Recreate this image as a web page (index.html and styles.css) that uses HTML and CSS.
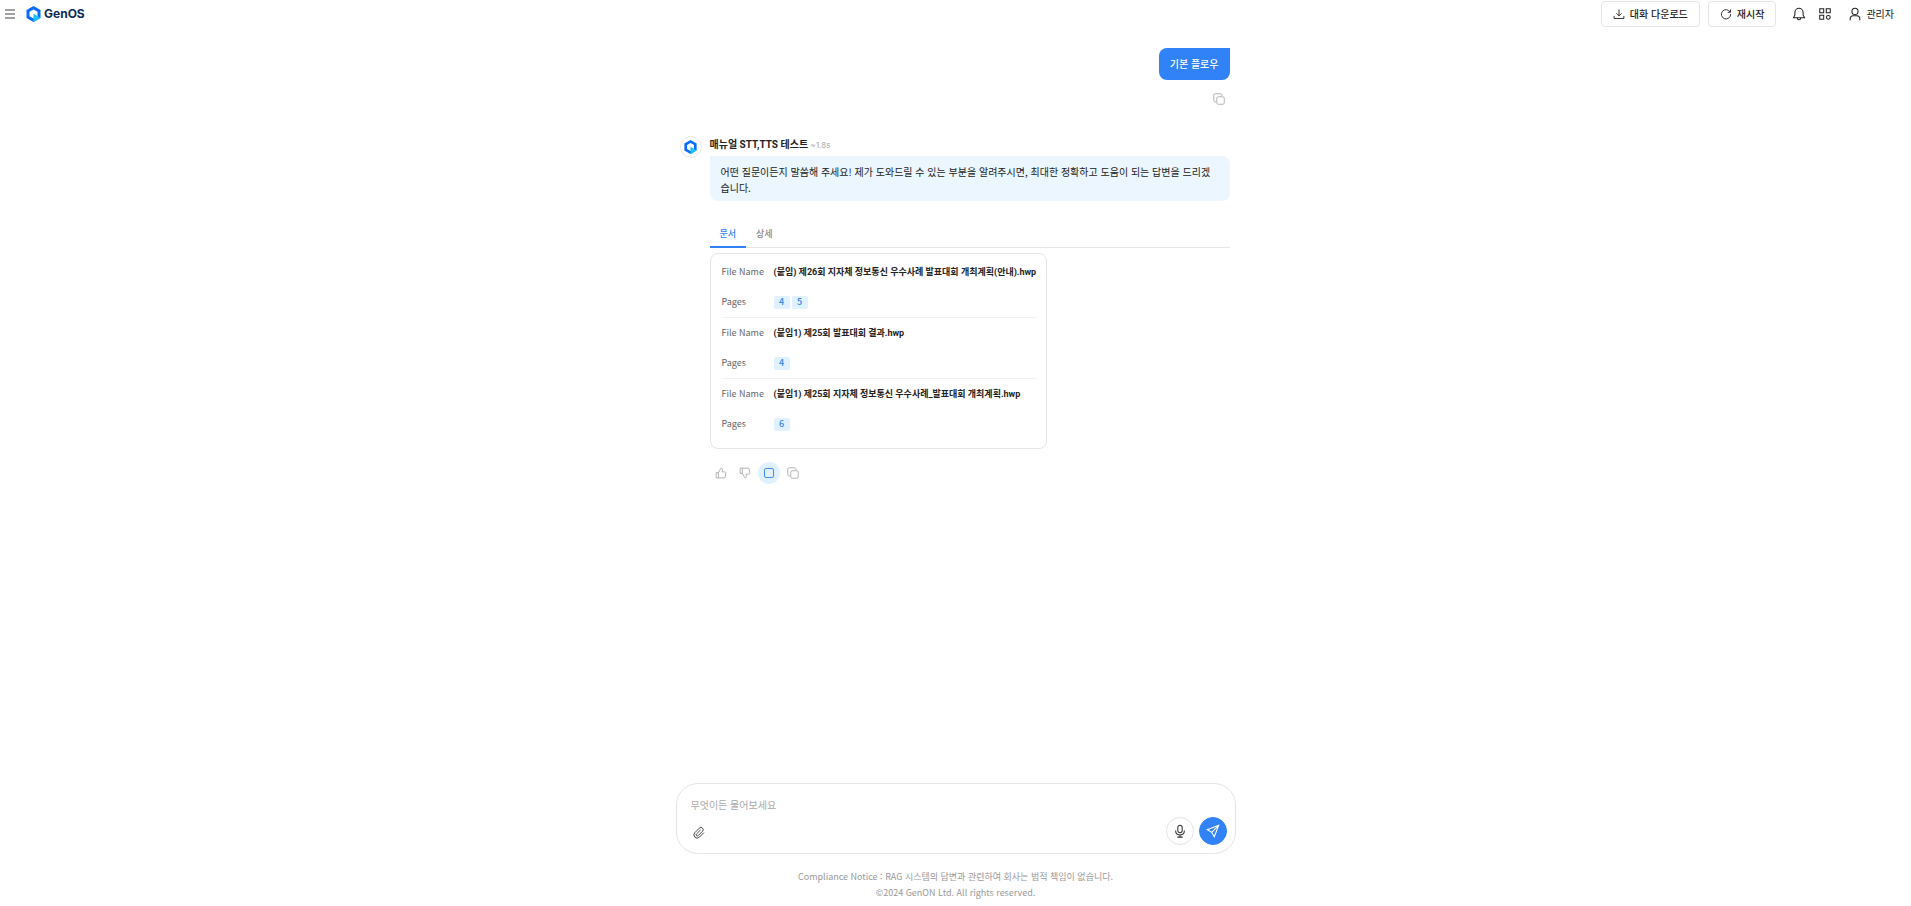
FILE: index.html
```html
<!DOCTYPE html>
<html lang="ko">
<head>
  <meta charset="UTF-8">
  <meta name="viewport" content="width=device-width, initial-scale=1">
  <title>GenOS</title>
  <link rel="stylesheet" href="styles.css">
</head>
<body>

  <!-- Shared icons -->
  <svg class="sprite" aria-hidden="true">
    <symbol id="logo" viewBox="0 0 28 32">
      <path d="M14 0 28 8V24L14 32 0 24V8Z" fill="#0a6cff"/>
      <path d="M14 7 22 11.500V20.500L14 25 6 20.500V11.500Z" fill="#fff"/>
      <path d="M14 15 28 24 14 32Z" fill="#19c2ff"/>
    </symbol>
    <symbol id="copy" viewBox="0 0 16 16">
      <path d="M4 12H3a2 2 0 0 1-2-2V3a2 2 0 0 1 2-2h7a2 2 0 0 1 2 2v1"/>
      <rect x="5" y="5" width="10" height="10" rx="2"/>
    </symbol>
    <symbol id="thumb" viewBox="0 0 16 16">
      <path d="M1.500 7.500h3v7h-3zM4.500 7.500 8 1.500c1.300 0 2 .9 2 2l-.5 3H13c1 0 1.700.8 1.500 1.800l-.9 4.900c-.1.800-.7 1.300-1.500 1.300H4.500"/>
    </symbol>
  </svg>

  <!-- Header -->
  <header>
    <div class="brand">
      <button class="icon-btn" aria-label="메뉴">
        <svg class="icon" viewBox="0 0 12 12"><path d="M1 2h10M1 6h10M1 10h10"/></svg>
      </button>
      <a href="#" class="logo">
        <svg class="logo-mark"><use href="#logo"/></svg>
        <span>GenOS</span>
      </a>
    </div>
    <div class="actions">
      <button class="outline-btn">
        <svg class="icon" viewBox="0 0 16 16"><path d="M8 2v8.500M4.500 7 8 10.500 11.500 7M1.500 10.500V14h13v-3.500"/></svg>
        대화 다운로드
      </button>
      <button class="outline-btn">
        <svg class="icon" viewBox="0 0 16 16"><path d="M13.500 5.500A6.200 6.200 0 1 0 14.200 8M14 2v3.700h-3.700"/></svg>
        재시작
      </button>
      <div class="tools">
        <button class="icon-btn" aria-label="알림">
          <svg class="icon-lg" viewBox="0 0 16 16"><path d="M8 1.500a4.700 4.700 0 0 0-4.700 4.700V9L1.700 12.300h12.600L12.700 9V6.200A4.700 4.700 0 0 0 8 1.500ZM6 12.500a2 2 0 0 0 4 0"/></svg>
        </button>
        <button class="icon-btn" aria-label="앱">
          <svg class="icon-lg" viewBox="0 0 16 16"><path d="M2 2h4.500v4.500H2zM9.500 2H14v4.500H9.500zM2 9.500h4.500V14H2z"/><circle cx="11.800" cy="11.800" r="2.200"/></svg>
        </button>
        <button class="user-btn">
          <svg class="icon-lg" viewBox="0 0 16 16"><circle cx="8" cy="5" r="3.500"/><path d="M2.500 15v-1.500c0-2 1.500-3.500 3.500-3.500h4c2 0 3.500 1.500 3.500 3.500V15"/></svg>
          관리자
        </button>
      </div>
    </div>
  </header>

  <!-- Conversation -->
  <main class="chat">
    <section class="question">
      <p class="bubble-user">기본 플로우</p>
      <button class="round-btn" aria-label="복사"><svg class="icon"><use href="#copy"/></svg></button>
    </section>

    <section class="answer">
      <div class="avatar"><svg><use href="#logo"/></svg></div>
      <div class="answer-body">
        <h2>매뉴얼 STT,TTS 테스트 <small>~1.8s</small></h2>
        <p class="bubble-bot">어떤 질문이든지 말씀해 주세요! 제가 도와드릴 수 있는 부분을 알려주시면, 최대한 정확하고 도움이 되는 답변을 드리겠습니다.</p>

        <div class="tabs" role="tablist">
          <button role="tab" class="active" aria-selected="true">문서</button>
          <button role="tab" aria-selected="false">상세</button>
        </div>

        <div class="files">
          <dl>
            <dt>File Name</dt>
            <dd class="name">(붙임) 제26회 지자체 정보통신 우수사례 발표대회 개최계획(안내).hwp</dd>
            <dt>Pages</dt>
            <dd><button class="page">4</button><button class="page">5</button></dd>
          </dl>
          <dl>
            <dt>File Name</dt>
            <dd class="name">(붙임1) 제25회 발표대회 결과.hwp</dd>
            <dt>Pages</dt>
            <dd><button class="page">4</button></dd>
          </dl>
          <dl>
            <dt>File Name</dt>
            <dd class="name">(붙임1) 제25회 지자체 정보통신 우수사례_발표대회 개최계획.hwp</dd>
            <dt>Pages</dt>
            <dd><button class="page">6</button></dd>
          </dl>
        </div>

        <div class="feedback">
          <button class="round-btn" aria-label="좋아요"><svg class="icon"><use href="#thumb"/></svg></button>
          <button class="round-btn" aria-label="싫어요"><svg class="icon flip"><use href="#thumb"/></svg></button>
          <button class="round-btn active" aria-label="정지"><svg class="icon" viewBox="0 0 16 16"><rect x="2" y="2" width="12" height="12" rx="2"/></svg></button>
          <button class="round-btn" aria-label="복사"><svg class="icon"><use href="#copy"/></svg></button>
        </div>
      </div>
    </section>
  </main>

  <!-- Composer -->
  <form class="composer">
    <input type="text" placeholder="무엇이든 물어보세요" aria-label="메시지">
    <div class="composer-row">
      <button type="button" class="icon-btn" aria-label="파일 첨부">
        <svg class="icon" viewBox="0 0 16 16"><path d="M14.500 7.500 8.500 13.500a4 4 0 0 1-6-6l6-6a2.900 2.900 0 0 1 4.200 4.200l-5.800 5.800a1.500 1.500 0 0 1-2.200-2.200L10 4"/></svg>
      </button>
      <div class="composer-actions">
        <button type="button" class="mic-btn" aria-label="음성 입력">
          <svg class="icon-lg" viewBox="0 0 16 16"><rect x="5.500" y="1.500" width="5" height="8.500" rx="2.500"/><path d="M3 7.500c0 3 2 5 5 5s5-2 5-5M8 12.500v2.500M5 15h6"/></svg>
        </button>
        <button type="submit" class="send-btn" aria-label="보내기">
          <svg class="icon-lg" viewBox="0 0 16 16"><path d="M14.500 1.500 1.500 6.500l5 3 3 5zM14.500 1.500l-8 8"/></svg>
        </button>
      </div>
    </div>
  </form>

  <!-- Footer -->
  <footer>
    <p>Compliance Notice : RAG 시스템의 답변과 관련하여 회사는 법적 책임이 없습니다.</p>
    <p>©2024 GenON Ltd. All rights reserved.</p>
  </footer>

</body>
</html>
```

FILE: styles.css
```css
/* RESET */
* {
  margin: 0;
  padding: 0;
  box-sizing: border-box;
}

body {
  display: flex;
  flex-direction: column;
  min-height: 100vh;
  background: #fff;
  color: #222;
  font-family: 'Noto Sans CJK KR', sans-serif;
  font-size: 10px;
  line-height: 16px;
}

button,
input {
  border: none;
  background: none;
  color: inherit;
  font: inherit;
}

button {
  display: flex;
  align-items: center;
  justify-content: center;
  cursor: pointer;
}

/* ICONS */
.sprite {
  display: none;
}

.icon,
.icon-lg {
  width: 12px;
  height: 12px;
  fill: none;
  stroke: currentColor;
  stroke-width: 1.2;
}

.icon-lg {
  width: 14px;
  height: 14px;
}

.flip {
  transform: scaleY(-1);
}

/* HEADER */
header {
  display: flex;
  justify-content: space-between;
  height: 28px;
  padding: 0 17px 0 4px;
}

.brand,
.logo,
.actions,
.tools {
  display: flex;
  align-items: center;
}

.brand {
  gap: 10px;
  color: #444;
}

.logo {
  gap: 3px;
  color: #0b2a55;
  font-family: Inter, sans-serif;
  font-size: 12px;
  font-weight: 700;
  text-decoration: none;
}

.logo-mark {
  width: 15px;
  height: 16px;
}

.actions {
  gap: 8px;
}

.outline-btn {
  height: 26px;
  padding: 0 11px;
  gap: 5px;
  border: 1px solid #e5e5e5;
  border-radius: 4px;
  font-weight: 500;
}

.tools {
  gap: 12px;
  margin-left: 8px;
}

.user-btn {
  gap: 4px;
  margin-left: 4px;
}

/* CONVERSATION */
.chat {
  flex: 1;
  width: 560px;
  max-width: 100%;
  margin: 0 auto;
  padding: 20px 6px 20px 4px;
}

.question {
  display: flex;
  flex-direction: column;
  align-items: flex-end;
  gap: 8px;
}

.bubble-user {
  padding: 8px 11px;
  border-radius: 8px 0 8px 8px;
  background: #3182f6;
  color: #fff;
  font-weight: 500;
}

.round-btn {
  width: 22px;
  height: 22px;
  border-radius: 50%;
  color: #aaa;
}

.round-btn.active {
  background: #e0f1ff;
  color: #3182f6;
}

.answer {
  display: flex;
  gap: 8px;
  margin-top: 26px;
}

.avatar {
  display: flex;
  align-items: center;
  justify-content: center;
  width: 22px;
  height: 22px;
  border: 1px solid #e8e8e8;
  border-radius: 50%;
}

.avatar svg {
  width: 13px;
  height: 14px;
}

.answer-body {
  flex: 1;
}

.answer h2 {
  padding: 1px 0 3px;
  font-family: Roboto, 'Noto Sans CJK KR', sans-serif;
  font-size: 10px;
  font-weight: 700;
}

.answer small {
  color: #aaa;
  font-family: Inter, sans-serif;
  font-size: 8px;
  font-weight: 400;
}

.bubble-bot {
  padding: 8px 11px 5px;
  border-radius: 0 8px 8px 8px;
  background: #ebf6ff;
  word-break: break-all;
}

/* TABS */
.tabs {
  display: flex;
  margin-top: 20px;
  border-bottom: 1px solid #e5e5e5;
}

.tabs button {
  height: 27px;
  margin-bottom: -1px;
  padding: 0 10px;
  border-bottom: 2px solid transparent;
  color: #888;
  font-size: 9px;
  font-weight: 500;
}

.tabs .active {
  border-color: #3182f6;
  color: #3182f6;
}

/* FILE LIST */
.files {
  width: fit-content;
  margin-top: 5px;
  padding: 3px 10px 9px 11px;
  border: 1px solid #e5e5e5;
  border-radius: 8px;
}

.files dl {
  display: grid;
  grid-template-columns: 44px auto;
  grid-auto-rows: 30px;
  column-gap: 8px;
  align-items: center;
}

.files dl + dl {
  border-top: 1px solid #f0f0f0;
}

.files dt {
  color: #666;
  font-size: 9px;
}

.files dd {
  display: flex;
  gap: 2px;
}

.files .name {
  font-family: Roboto, 'Noto Sans CJK KR', sans-serif;
  font-size: 9px;
  font-weight: 700;
}

.page {
  width: 16px;
  height: 13px;
  border-radius: 2px;
  background: #e0f1ff;
  color: #3182f6;
  font-size: 9px;
  font-weight: 500;
}

.feedback {
  display: flex;
  gap: 2px;
  margin-top: 13px;
}

/* COMPOSER */
.composer {
  width: 560px;
  max-width: 100%;
  margin: 0 auto;
  padding: 13px 8px 8px 14px;
  border: 1px solid #e5e5e5;
  border-radius: 22px;
}

.composer input {
  display: block;
  width: 100%;
  height: 16px;
  outline: none;
}

.composer input::placeholder {
  color: #aaa;
}

.composer-row {
  display: flex;
  align-items: flex-end;
  justify-content: space-between;
  margin-top: 4px;
  padding-left: 2px;
  color: #333;
}

.composer-row > .icon-btn {
  padding-bottom: 6px;
}

.composer-actions {
  display: flex;
  gap: 5px;
}

.mic-btn,
.send-btn {
  width: 28px;
  height: 28px;
  border: 1px solid #e5e5e5;
  border-radius: 50%;
}

.send-btn {
  border-color: #3182f6;
  background: #3182f6;
  color: #fff;
}

/* FOOTER */
footer {
  padding: 15px 0 5px;
  color: #999;
  font-size: 9px;
  text-align: center;
}
```
